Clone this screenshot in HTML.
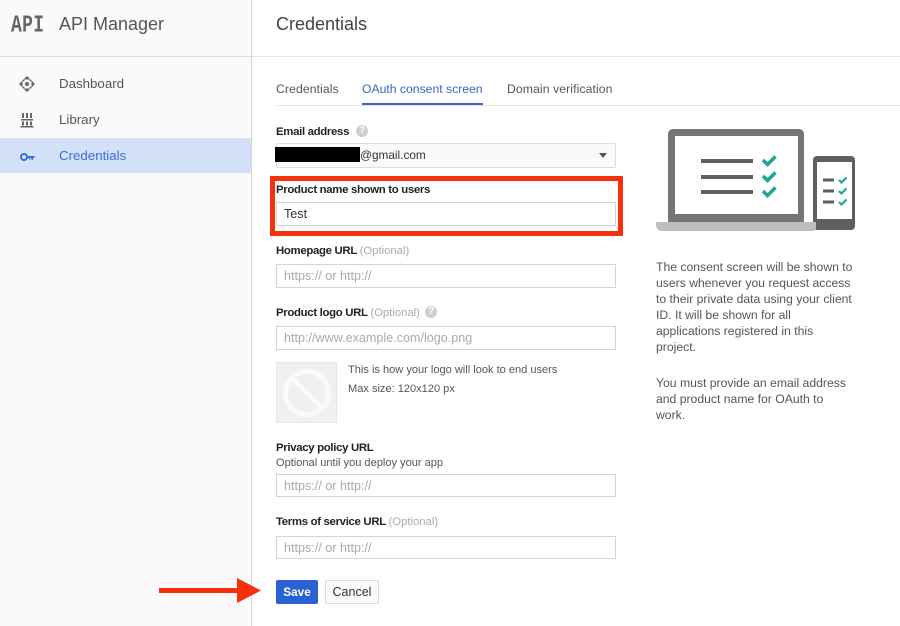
<!DOCTYPE html>
<html><head><meta charset="utf-8"><style>
html,body{margin:0;padding:0;background:#fff}
body{width:900px;height:626px;position:relative;overflow:hidden;font-family:"Liberation Sans",sans-serif;color:#444}
.a{position:absolute;white-space:nowrap}
.l{font-size:11.4px;line-height:14px;color:#222;font-weight:bold;letter-spacing:-.32px}
.l span{font-weight:normal;color:#aaa;font-size:11.3px;letter-spacing:0}
.i{position:absolute;left:276px;width:338px;height:22px;border:1px solid #d4d4d4;font-size:12.6px;line-height:22px;color:#aaa;text-indent:7px;background:#fff}
.n{font-size:13.3px;line-height:18px;left:59px;color:#555}
.t{font-size:12.2px;line-height:16px;color:#555;letter-spacing:.1px}
.s{font-size:11.05px;line-height:16px;color:#555}
.q{position:absolute;width:12px;height:12px;border-radius:50%;background:#cfcfcf;color:#fff;font-size:10px;line-height:12px;text-align:center;font-weight:bold}
</style></head><body>
<div class="a" style="left:0;top:0;width:251px;height:626px;background:#fafafa;border-right:1px solid #d6d6d6"></div>
<div class="a" style="left:0;top:56px;width:252px;height:1px;background:#dcdcdc"></div>
<div class="a" style="left:252px;top:56px;width:648px;height:1px;background:#e8e8e8"></div>
<div class="a" style="left:0;top:138px;width:251px;height:35px;background:#d2e0f8"></div>

<div class="a" style="left:11px;top:17px;font-family:'Liberation Mono',monospace;font-weight:bold;font-size:18px;line-height:18px;color:#666;letter-spacing:.3px;transform:scaleY(1.35);transform-origin:center">API</div>
<div class="a" style="left:59px;top:13px;font-size:18px;line-height:22px;color:#555">API Manager</div>
<div class="a" style="left:276px;top:13px;font-size:18px;line-height:22px;color:#444">Credentials</div>

<svg class="a" style="left:18px;top:75px" width="18" height="18" viewBox="0 0 18 18" fill="#666">
<path d="M9 1l3.500 3.500h-7zM9 17l-3.500-3.500h7zM1 9l3.500-3.500v7zM17 9l-3.500 3.500v-7z"/><circle cx="9" cy="9" r="2"/><circle cx="5.500" cy="5.500" r="1"/><circle cx="12.500" cy="5.500" r="1"/><circle cx="5.500" cy="12.500" r="1"/><circle cx="12.500" cy="12.500" r="1"/></svg>
<svg class="a" style="left:20px;top:112px" width="14" height="16" viewBox="0 0 14 16" fill="#666">
<path d="M2 1h2v5H2zM6 1h2v5H6zM10 1h2v5h-2zM1 7h12v1.500H1zM2 9.500h2v4H2zM6 9.500h2v4H6zM10 9.500h2v4h-2zM.5 14h13v1.500H.5z"/></svg>
<svg class="a" style="left:19px;top:151px" width="17" height="12" viewBox="0 0 17 12">
<circle cx="5" cy="6" r="3" fill="none" stroke="#3b6fd8" stroke-width="2"/><path d="M8 5h7.500v2h-1.500v2h-1.500V7h-1v1.500H10V7H8z" fill="#3b6fd8"/></svg>

<div class="a n" style="top:75px">Dashboard</div>
<div class="a n" style="top:111px">Library</div>
<div class="a n" style="top:147px;color:#3b6fd8">Credentials</div>

<div class="a" style="left:276px;top:105px;width:624px;height:1px;background:#e2e2e2"></div>
<div class="a" style="left:362px;top:103px;width:121px;height:2px;background:#3b64c4"></div>
<div class="a t" style="left:276px;top:81px">Credentials</div>
<div class="a t" style="left:362px;top:81px;color:#3b64c4;letter-spacing:0">OAuth consent screen</div>
<div class="a t" style="left:507px;top:81px">Domain verification</div>

<div class="a l" style="left:276px;top:125px">Email address</div>
<div class="q" style="left:356px;top:125px">?</div>
<div class="a" style="left:276px;top:143px;width:338px;height:23px;border:1px solid #dcdcdc;border-radius:2px;background:#fafafa"></div>
<div class="a" style="left:275px;top:147px;width:85px;height:15px;background:#000"></div>
<div class="a" style="left:360px;top:147px;font-size:11.8px;line-height:16px;color:#333">@gmail.com</div>
<div class="a" style="left:599px;top:153px;width:0;height:0;border-left:4.500px solid transparent;border-right:4.500px solid transparent;border-top:5px solid #555"></div>

<div class="a" style="left:270px;top:176px;width:343px;height:50px;border:5px solid #f5300d"></div>
<div class="a l" style="left:276px;top:183px">Product name shown to users</div>
<div class="i" style="top:202px;color:#333">Test</div>

<div class="a l" style="left:276px;top:244px">Homepage URL <span>(Optional)</span></div>
<div class="i" style="top:264px">https:// or http://</div>

<div class="a l" style="left:276px;top:306px">Product logo URL <span>(Optional)</span></div>
<div class="q" style="left:425px;top:306px">?</div>
<div class="i" style="top:326px">http://www.example.com/logo.png</div>

<svg class="a" style="left:276px;top:362px" width="61" height="61" viewBox="0 0 61 61">
<rect x=".5" y=".5" width="60" height="60" fill="#f0f0f0" stroke="#e6e6e6"/>
<circle cx="31" cy="31" r="21.500" fill="none" stroke="#fafafa" stroke-width="5"/>
<path d="M16 16l30 30" stroke="#fafafa" stroke-width="5"/></svg>
<div class="a s" style="left:348px;top:362px">This is how your logo will look to end users</div>
<div class="a s" style="left:348px;top:381px">Max size: 120x120 px</div>

<div class="a l" style="left:276px;top:441px">Privacy policy URL</div>
<div class="a s" style="left:276px;top:455px">Optional until you deploy your app</div>
<div class="i" style="top:474px;height:21px">https:// or http://</div>

<div class="a l" style="left:276px;top:515px">Terms of service URL <span>(Optional)</span></div>
<div class="i" style="top:536px;height:21px">https:// or http://</div>

<div class="a" style="left:276px;top:580px;width:42px;height:24px;background:#2a62d4;border-radius:2px;color:#fff;font-size:11.8px;font-weight:bold;line-height:24px;text-align:center">Save</div>
<div class="a" style="left:325px;top:580px;width:52px;height:22px;border:1px solid #dcdcdc;border-radius:2px;background:#fafafa;color:#333;font-size:12.5px;line-height:22px;text-align:center">Cancel</div>
<svg class="a" style="left:159px;top:577px" width="116" height="27" viewBox="0 0 116 27"><path d="M0 11h78V1l24 12.500L78 26V16H0z" fill="#f5300d"/></svg>

<svg class="a" style="left:655px;top:128px" width="202" height="104" viewBox="0 0 202 104">
<rect x="158" y="28" width="42" height="74" rx="4" fill="#5f5f5f"/>
<rect x="162" y="34" width="35" height="57" fill="#fff"/>
<path d="M13 94V6a5 5 0 0 1 5-5h126a5 5 0 0 1 5 5v88z" fill="#757575"/>
<rect x="20" y="8" width="123" height="78" fill="#fff"/>
<path d="M1 94h160v6a3 3 0 0 1-3 3H7a6 6 0 0 1-6-6z" fill="#bdbdbd"/>
<g fill="#5f5f5f"><rect x="46" y="31" width="52" height="4"/><rect x="46" y="47" width="52" height="4"/><rect x="46" y="62" width="52" height="4"/>
<rect x="168" y="50.500" width="11" height="3"/><rect x="168" y="61.500" width="11" height="3"/><rect x="168" y="72.500" width="11" height="3"/></g>
<g fill="none" stroke="#1fa596" stroke-width="3.500"><path d="M108 32l4.500 4.500 8-8"/><path d="M108 48l4.500 4.500 8-8"/><path d="M108 63l4.500 4.500 8-8"/></g>
<g fill="none" stroke="#1fa596" stroke-width="2.200"><path d="M184 52l2.500 2.500 5-5"/><path d="M184 63l2.500 2.500 5-5"/><path d="M184 74l2.500 2.500 5-5"/></g>
</svg>

<div class="a" style="left:656px;top:259px;font-size:12.2px;line-height:16px;color:#555">The consent screen will be shown to<br>users whenever you request access<br>to their private data using your client<br>ID. It will be shown for all<br>applications registered in this<br>project.</div>
<div class="a" style="left:656px;top:375px;font-size:12.2px;line-height:16px;color:#555">You must provide an email address<br>and product name for OAuth to<br>work.</div>
</body></html>
